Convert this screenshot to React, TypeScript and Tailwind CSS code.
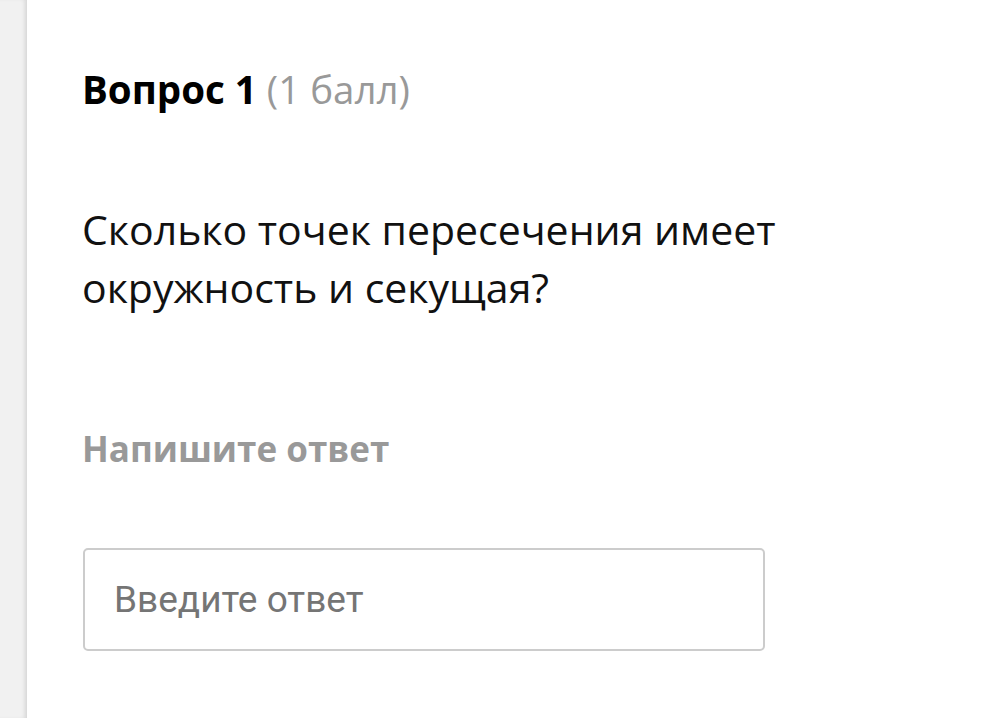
export default function App() {
  return (
    <div className="flex h-[718px] w-[982px] overflow-hidden bg-white" style={{ fontFamily: '"Open Sans", sans-serif' }}>
      <div className="h-full w-[27px] shrink-0 bg-[#f1f1f1] shadow-[inset_-4px_0_4px_-2px_rgba(0,0,0,0.12)]" />
      <div className="flex-1 pl-[55px] pt-[63px]">
        <div className="text-[38.5px] leading-[52px] text-black">
          <span className="font-bold">Вопрос 1</span>{" "}
          <span className="text-[#999999]">(1 балл)</span>
        </div>
        <div className="mt-[85px] text-[41px] leading-[58px] text-[#111111]">
          Сколько точек пересечения имеет
          <br />
          окружность и секущая?
        </div>
        <div className="mt-[109px] text-[35px] font-bold leading-[48px] text-[#999999]">Напишите ответ</div>
        <div className="ml-px mt-[75px] flex h-[103px] w-[682px] items-center rounded-[5px] border-2 border-[#cccccc] pl-[29px]">
          <span className="text-[37px] text-[#757575]" style={{ fontFamily: 'Roboto, sans-serif' }}>Введите ответ</span>
        </div>
      </div>
    </div>
  );
}
